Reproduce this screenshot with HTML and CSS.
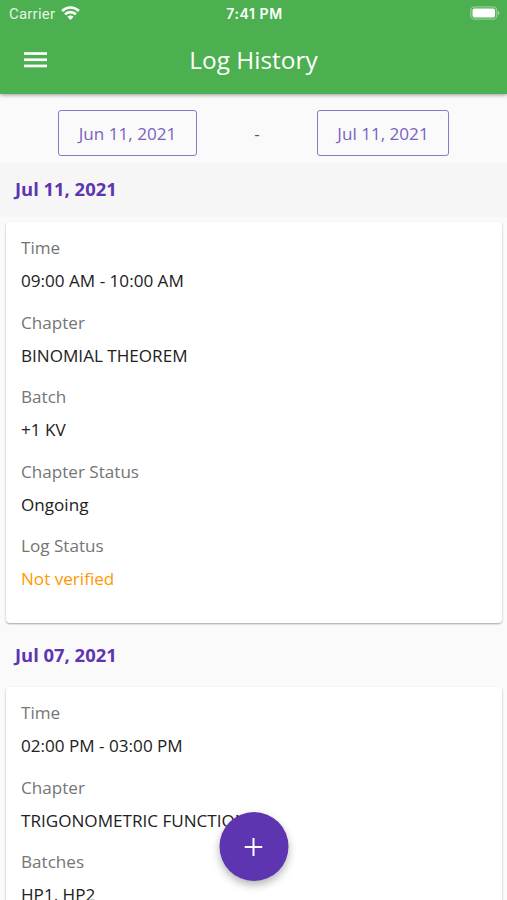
FILE: index.html
```
<!DOCTYPE html>
<html lang="en">

<head>
    <meta charset="utf-8">
    <title>Log History</title>
    <link rel="stylesheet" href="styles.css">
</head>

<body>
    <header class="header">
        <div class="status-bar">
            <div class="carrier">
                <span>Carrier</span>
                <svg class="wifi" width="19" height="14" viewBox="0 0 19 14" fill="none" stroke="#fff" stroke-width="2.6">
                    <path d="M1.1 5a12 12 0 0 1 16.8 0" />
                    <path d="M4.1 8.3a7.8 7.8 0 0 1 10.8 0" />
                    <path d="M9.5 14 6.4 10.8a4.4 4.4 0 0 1 6.2 0z" fill="#fff" stroke="none" />
                </svg>
            </div>
            <div class="clock">7:41 PM</div>
            <div class="power">
                <svg width="30" height="14" viewBox="0 0 30 14">
                    <rect x="0.8" y="0.8" width="26" height="12.4" rx="3.8" fill="none" stroke="#fff" stroke-opacity="0.4" stroke-width="1.3" />
                    <rect x="2.5" y="2.4" width="22.6" height="9.2" rx="2" fill="#fff" />
                    <path d="M28 4.8c2 .8 2 3.6 0 4.4z" fill="#fff" fill-opacity="0.45" />
                </svg>
            </div>
        </div>
        <div class="toolbar">
            <svg class="menu" width="23" height="16" viewBox="0 0 23 16" fill="#fff">
                <rect y="0.2" width="23" height="2.7" />
                <rect y="6.4" width="23" height="2.7" />
                <rect y="12.6" width="23" height="2.7" />
            </svg>
            <h1>Log History</h1>
        </div>
    </header>

    <main>
        <div class="range">
            <button class="date-button from">Jun 11, 2021</button>
            <span class="dash">-</span>
            <button class="date-button to">Jul 11, 2021</button>
        </div>

        <h2 class="day pinned">Jul 11, 2021</h2>
        <dl class="card">
            <dt>Time</dt>
            <dd>09:00 AM - 10:00 AM</dd>
            <dt>Chapter</dt>
            <dd>BINOMIAL THEOREM</dd>
            <dt>Batch</dt>
            <dd>+1 KV</dd>
            <dt>Chapter Status</dt>
            <dd>Ongoing</dd>
            <dt>Log Status</dt>
            <dd class="pending">Not verified</dd>
        </dl>

        <h2 class="day">Jul 07, 2021</h2>
        <dl class="card">
            <dt>Time</dt>
            <dd>02:00 PM - 03:00 PM</dd>
            <dt>Chapter</dt>
            <dd>TRIGONOMETRIC FUNCTIONS</dd>
            <dt>Batches</dt>
            <dd>HP1, HP2</dd>
        </dl>
    </main>

    <button class="add" aria-label="Add log">
        <svg width="18" height="18" viewBox="0 0 18 18" fill="#fff">
            <path d="M8 0h2v8h8v2h-8v8H8v-8H0V8h8z" />
        </svg>
    </button>
</body>

</html>
```

FILE: styles.css
```
* {
    box-sizing: border-box;
}

body {
    margin: 0;
    height: 900px;
    overflow: hidden;
    background-color: #fafafa;
    font-family: "Open Sans", "Noto Sans", sans-serif;
    font-size: 17.1px;
    color: #212121;
}

.header {
    position: relative;
    height: 94px;
    background-color: #4caf50;
    color: #fff;
    box-shadow: 0 1px 4px rgba(0, 0, 0, 0.4);
}

.status-bar {
    display: grid;
    grid-template-columns: 1fr auto 1fr;
    align-items: center;
    height: 27px;
    padding: 0 7px 0 9px;
    font-family: Inter, sans-serif;
    font-size: 14px;
}

.carrier {
    display: flex;
    align-items: center;
    gap: 6px;
    font-family: Roboto, sans-serif;
    font-size: 15px;
    letter-spacing: 0.2px;
    color: #e3f4e4;
}

.wifi {
    display: block;
    margin-bottom: 2px;
}

.clock {
    font-weight: 600;
    letter-spacing: 0.6px;
}

.power {
    display: flex;
    justify-content: flex-end;
    margin-bottom: 1px;
}

.toolbar {
    display: grid;
    grid-template-columns: 80px 1fr 80px;
    align-items: center;
    height: 66px;
}

.menu {
    margin-left: 24px;
}

h1 {
    margin: 0 0 2px;
    font-size: 24.4px;
    font-weight: 400;
    text-align: center;
}

.range {
    display: flex;
    justify-content: space-between;
    align-items: center;
    height: 69px;
    padding: 9px 58px 0;
    color: #555;
}

.date-button {
    height: 46px;
    padding: 0;
    border: 1.5px solid #8d78c9;
    border-radius: 3px;
    background: none;
    font: inherit;
    color: #7a62bf;
}

.from {
    width: 139px;
}

.to {
    width: 132px;
}

.day {
    margin: 0;
    height: 63px;
    padding: 0 15px;
    font-size: 18.4px;
    font-weight: 700;
    line-height: 62px;
    color: #5e35b1;
}

.pinned {
    height: 54px;
    margin-bottom: 5px;
    line-height: 52px;
    background-color: #f6f6f6;
}

.card {
    margin: 0 5px 1px 6px;
    height: 401px;
    padding: 9px 15px;
    border-radius: 4px;
    background-color: #fff;
    box-shadow: 0 1px 2px rgba(0, 0, 0, 0.35);
}

dt {
    height: 33px;
    line-height: 33px;
    color: #757575;
}

dd {
    height: 33px;
    margin: 0 0 8.5px;
    line-height: 33px;
}

.pending {
    color: #ff9800;
}

/* floating button over the list */
.add {
    position: fixed;
    left: 50%;
    bottom: 19px;
    transform: translateX(-50%);
    display: flex;
    align-items: center;
    justify-content: center;
    width: 69px;
    height: 69px;
    padding: 0;
    border: none;
    border-radius: 50%;
    background-color: #5e35b1;
    box-shadow: 0 4px 8px rgba(0, 0, 0, 0.3);
}
```
